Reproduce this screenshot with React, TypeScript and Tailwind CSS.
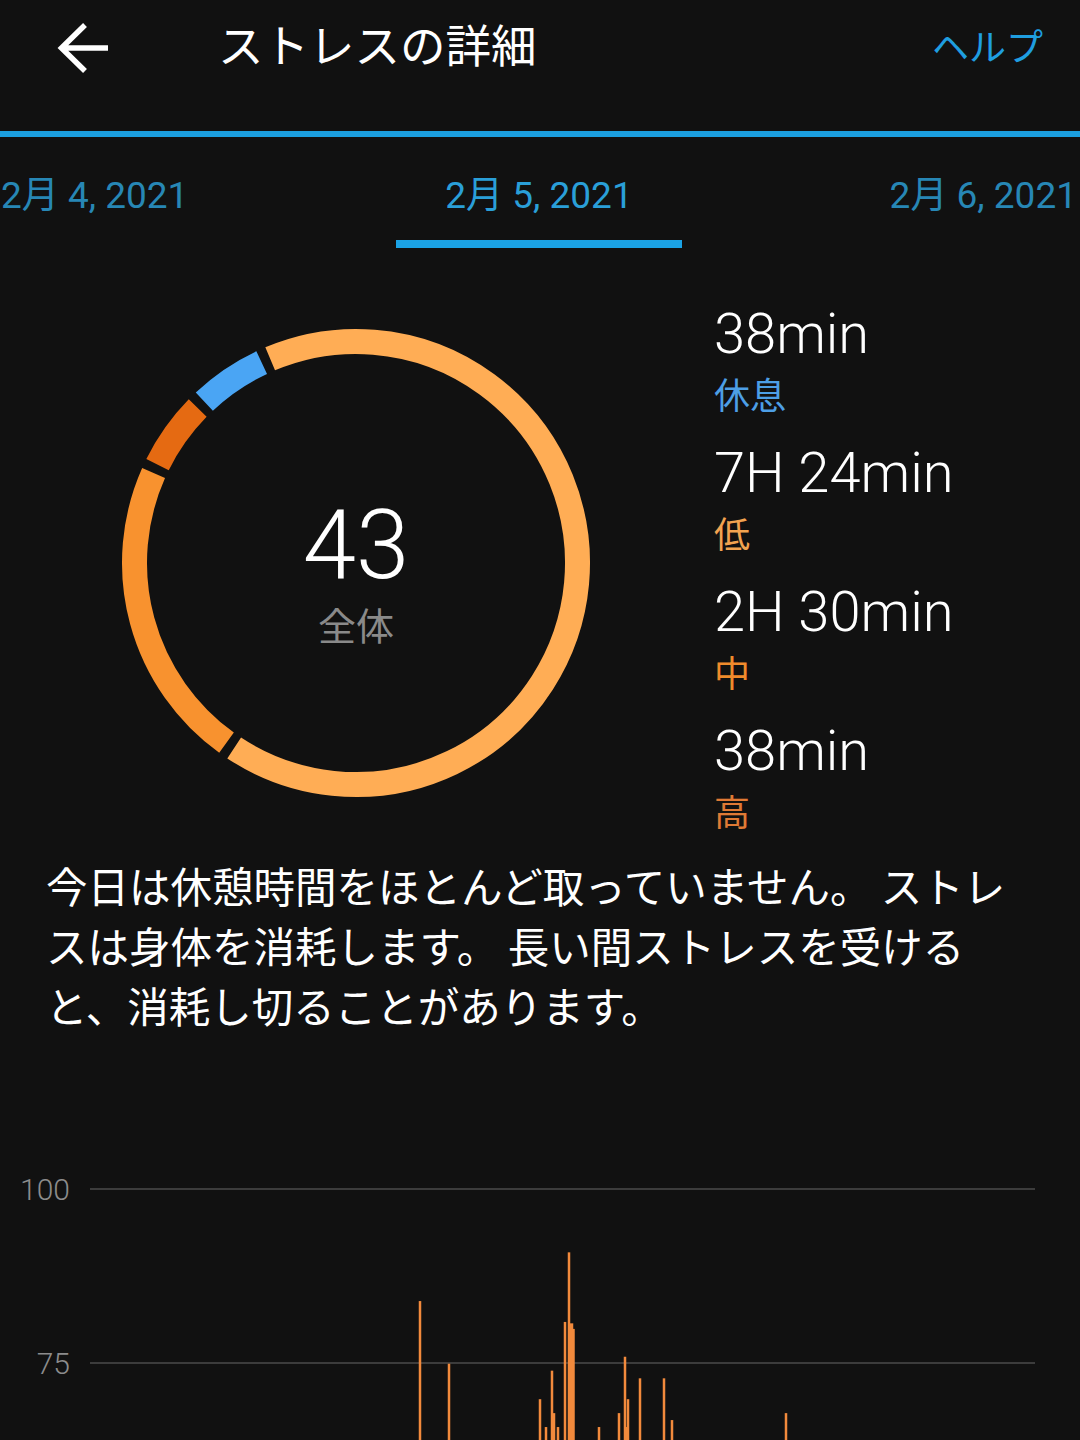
import React from "react";

const segments = [
    { min: 444, color: "#ffad55" },
    { min: 150, color: "#f8922f" },
    { min: 38, color: "#e56a12" },
    { min: 38, color: "#4aa5f4" },
];

const stats = [
    { value: "38min", label: "休息", color: "text-[#4d9fe6]" },
    { value: "7H 24min", label: "低", color: "text-[#f2a350]" },
    { value: "2H 30min", label: "中", color: "text-[#f08b2c]" },
    { value: "38min", label: "高", color: "text-[#e07a35]" },
];

// x position, stress value, stroke width
const bars: [number, number, number][] = [
    [420, 83.9, 2.5],
    [449, 74.9, 2.5],
    [540, 69.8, 2.5],
    [546, 65.8, 2.5],
    [552, 73.9, 2.5],
    [554, 67.8, 2.5],
    [558, 65.8, 2.5],
    [565, 80.9, 2.5],
    [569, 90.9, 2.5],
    [571, 80.7, 4.5],
    [573.5, 79.9, 2.5],
    [599, 65.8, 2.5],
    [619, 67.8, 2.5],
    [625, 75.9, 2.5],
    [626.5, 65.8, 3],
    [628, 69.8, 2.5],
    [640, 72.8, 2.5],
    [664, 72.8, 2.5],
    [672, 66.8, 2.5],
    [786, 67.8, 2.5],
];

function polar(cx: number, cy: number, r: number, deg: number) {
    const a = ((deg - 90) * Math.PI) / 180;
    return [cx + r * Math.cos(a), cy + r * Math.sin(a)];
}

function arc(cx: number, cy: number, r: number, start: number, end: number) {
    const [x1, y1] = polar(cx, cy, r, start);
    const [x2, y2] = polar(cx, cy, r, end);
    const large = end - start > 180 ? 1 : 0;
    return `M ${x1} ${y1} A ${r} ${r} 0 ${large} 1 ${x2} ${y2}`;
}

function StressRing() {
    const total = segments.reduce((s, x) => s + x.min, 0);
    let angle = 336;
    const gap = 1.2;
    return (
        <div className="relative h-[480px] w-[480px]">
            <svg width="480" height="480" viewBox="0 0 480 480">
                {segments.map((seg, i) => {
                    const span = (seg.min / total) * 360;
                    const d = arc(240, 240, 221.5, angle + gap, angle + span - gap);
                    angle += span;
                    return (
                        <path
                            key={i}
                            d={d}
                            fill="none"
                            stroke={seg.color}
                            strokeWidth="25"
                        />
                    );
                })}
            </svg>
            <div className="absolute inset-0 flex flex-col items-center pt-[174px]">
                <div className="text-[96px] font-light leading-none text-white">43</div>
                <div className="mt-[15px] text-[38px] leading-none text-[#8a8a8a]">全体</div>
            </div>
        </div>
    );
}

function Chart() {
    const y = (v: number) => 49 + (100 - v) * 6.96;
    return (
        <svg width="1080" height="300" viewBox="0 0 1080 300">
            <text x="70" y="60" textAnchor="end" fill="#8c8c8c" fontSize="30" fontFamily="Roboto, sans-serif" fontWeight="300">
                100
            </text>
            <text x="70" y="234" textAnchor="end" fill="#8c8c8c" fontSize="30" fontFamily="Roboto, sans-serif" fontWeight="300">
                75
            </text>
            <line x1="90" y1="49" x2="1035" y2="49" stroke="#3c3c3c" strokeWidth="2" />
            <line x1="90" y1="223" x2="1035" y2="223" stroke="#3c3c3c" strokeWidth="2" />
            {bars.map(([x, v, w], i) => (
                <line key={i} x1={x} y1={y(v)} x2={x} y2="300" stroke="#f28a3c" strokeWidth={w} />
            ))}
        </svg>
    );
}

export default function App() {
    return (
        <div className="h-[1440px] w-[1080px] overflow-hidden bg-[#111111] font-[Roboto,'Noto_Sans_CJK_JP',sans-serif]">
            <div className="h-[131px]">
                <div className="flex h-[96px] items-center">
                    <svg className="ml-[56px]" width="56" height="56" viewBox="0 0 56 56">
                        <path
                            d="M52 28H6M29 5L5.5 28L29 51"
                            fill="none"
                            stroke="white"
                            strokeWidth="5.5"
                            strokeLinejoin="miter"
                        />
                    </svg>
                    <div className="ml-[106px] text-[45.5px] leading-none text-white">ストレスの詳細</div>
                    <div className="ml-auto mr-[37px] text-[37px] leading-none text-[#1f9ee0]">ヘルプ</div>
                </div>
            </div>
            <div className="h-[6px] bg-[#1b9fe0]" />

            <div className="flex h-[112px] justify-between pt-[40px] text-[37px] leading-none">
                <div className="pl-[1px] text-[#2787b5]">2月 4, 2021</div>
                <div className="flex flex-col items-center">
                    <div className="text-[#2a9fd8]">2月 5, 2021</div>
                    <div className="mt-[26px] h-[8px] w-[286px] bg-[#1ba3e6]" />
                </div>
                <div className="pr-[3px] text-[#2787b5]">2月 6, 2021</div>
            </div>

            <div className="flex h-[606px]">
                <div className="ml-[116px] mt-[74px]">
                    <StressRing />
                </div>
                <div className="ml-[118px] mt-[57px] flex flex-col gap-[30px]">
                    {stats.map((s, i) => (
                        <div key={i} className="flex flex-col gap-[17px]">
                            <div className="text-[56px] font-light leading-none text-white">{s.value}</div>
                            <div className={`text-[36px] leading-none ${s.color}`}>{s.label}</div>
                        </div>
                    ))}
                </div>
            </div>

            <p
                lang="ja"
                className="w-[1045px] pl-[46px] font-['Noto_Sans_CJK_JP',sans-serif] text-[41.5px] leading-[60px] text-white"
            >
                今日は休憩時間をほとんど取っていません。 ストレスは身体を消耗します。 長い間ストレスを受けると、消耗し切ることがあります。
            </p>

            <div className="mt-[105px]">
                <Chart />
            </div>
        </div>
    );
}
